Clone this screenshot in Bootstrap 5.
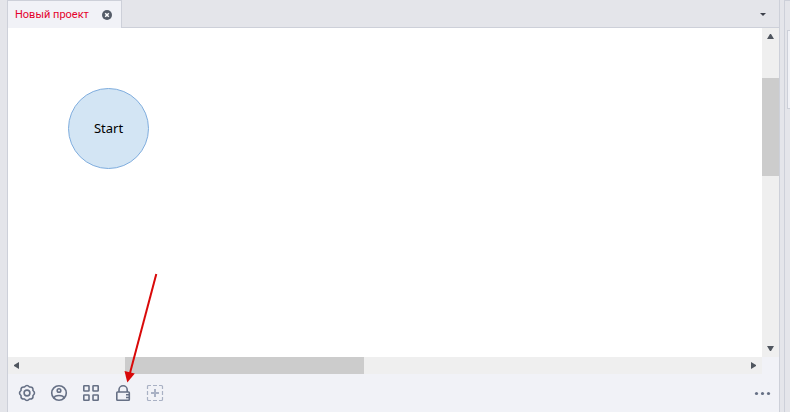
<!DOCTYPE html>
<html lang="ru">
<head>
<meta charset="utf-8">
<meta name="viewport" content="width=device-width, initial-scale=1">
<title>Новый проект</title>
<link href="https://cdn.jsdelivr.net/npm/bootstrap@5.3.0/dist/css/bootstrap.min.css" rel="stylesheet">
<style>
  :root { --edge: #cdd0d9; --chrome: #e4e5ea; --panel: #f1f2f7; --ink: #667085; --track: #efefef; --thumb: #cccccc; }
  body { background: var(--chrome); font-family: Roboto, "Noto Sans", sans-serif; font-size: 11px; line-height: 16px; color: #000; }
  svg { display: block; }
  button { border: 0; padding: 0; background: transparent; color: inherit; }
  .editor { margin-left: 7px; border: solid var(--edge); border-width: 0 1px; background: var(--panel); }
  .tab-strip { height: 28px; background: var(--chrome); box-shadow: inset 0 -1px var(--edge); }
  .doc-tab { background: var(--panel); border: solid var(--edge); border-width: 1px 1px 0 0; padding: 0 9px 0 7px; gap: 13px; }
  .doc-title { color: #e4002b; }
  .tab-menu { width: 17px; margin-right: 8px; color: #3c414b; }
  .canvas { background: #fff; }
  .node-start { left: 60px; top: 60px; width: 81px; height: 81px; padding-bottom: 2px; background: #d3e5f4; border: 1px solid #7fadde; font-family: "Noto Sans", sans-serif; font-size: 13px; }
  .bar-v { width: 17px; background: var(--track); }
  .bar-h { height: 17px; margin-right: 17px; background: var(--track); }
  .step { flex: 0 0 17px; color: #50565f; display: flex; align-items: center; justify-content: center; }
  .thumb { background: var(--thumb); flex: 98 1 0; }
  .before { flex: 33 1 0; } .after { flex: 164 1 0; }
  .bar-h .before { flex-grow: 100; } .bar-h .thumb { flex-grow: 239; } .bar-h .after { flex-grow: 381; }
  .tools { height: 38px; padding: 0 8px 0 10px; gap: 14px; color: var(--ink); }
  .side { width: 6px; margin-left: 4px; border: solid var(--edge); border-width: 1px 0 0 1px; padding: 29px 0 0 2px; }
  .side-box { height: 79px; background: var(--panel); border: solid var(--edge); border-width: 1px 0 1px 1px; }
  .pointer { left: 120px; top: 272px; pointer-events: none; }
</style>
<script src="https://cdn.jsdelivr.net/npm/bootstrap@5.3.0/dist/js/bootstrap.bundle.min.js"></script>
</head>
<body class="vh-100 d-flex overflow-hidden position-relative">
<main class="editor flex-grow-1 d-flex flex-column">
  <header class="tab-strip d-flex">
    <div class="doc-tab d-flex align-items-center">
      <span class="doc-title">Новый проект</span>
      <button type="button" aria-label="Закрыть"><svg width="10" height="10" viewBox="0 0 10 10"><circle cx="5" cy="5" r="5" fill="#555c68"/><path d="M3.2 3.2l3.6 3.6M6.8 3.2L3.2 6.8" stroke="#fff" stroke-width="1.5"/></svg></button>
    </div>
    <button class="tab-menu ms-auto d-flex align-items-center justify-content-center" type="button" aria-label="Список вкладок"><svg width="6" height="3" viewBox="0 0 6 3"><path d="M0 0h6L3 3z" fill="currentColor"/></svg></button>
  </header>
  <div class="flex-grow-1 d-flex">
    <section class="canvas flex-grow-1 position-relative" aria-label="Схема">
      <div class="node-start position-absolute rounded-circle d-flex align-items-center justify-content-center">Start</div>
    </section>
    <div class="bar-v d-flex flex-column">
      <button class="step" type="button" aria-label="Вверх"><svg width="7" height="5" viewBox="0 0 7 5"><path d="M0 5h7L4 0H3z" fill="currentColor"/></svg></button>
      <div class="before"></div><div class="thumb"></div><div class="after"></div>
      <button class="step" type="button" aria-label="Вниз"><svg width="7" height="5" viewBox="0 0 7 5"><path d="M0 0h7L4 5H3z" fill="currentColor"/></svg></button>
    </div>
  </div>
  <div class="bar-h d-flex">
    <button class="step" type="button" aria-label="Влево"><svg width="5" height="7" viewBox="0 0 5 7"><path d="M5 0v7L0 4V3z" fill="currentColor"/></svg></button>
    <div class="before"></div><div class="thumb"></div><div class="after"></div>
    <button class="step" type="button" aria-label="Вправо"><svg width="5" height="7" viewBox="0 0 5 7"><path d="M0 0v7l5-3V3z" fill="currentColor"/></svg></button>
  </div>
  <footer class="tools d-flex align-items-center">
    <button type="button" aria-label="Настройки"><svg width="18" height="18" viewBox="0 0 18 18" fill="none" stroke="currentColor" stroke-width="1.6" stroke-linejoin="round"><path d="M15 6.500Q18 9 15 11.500 15.400 15.400 11.500 15 9 18 6.500 15 2.600 15.400 3 11.500 0 9 3 6.500 2.600 2.600 6.500 3 9 0 11.500 3 15.400 2.600 15 6.500z" style="display:none"/><path d="M15 6.500Q18 9 15 11.500Q15.400 15.400 11.500 15Q9 18 6.500 15Q2.600 15.400 3 11.500Q0 9 3 6.500Q2.600 2.600 6.500 3Q9 0 11.500 3Q15.400 2.600 15 6.500z"/><circle cx="9" cy="9" r="2.900"/></svg></button>
    <button type="button" aria-label="Профиль"><svg width="18" height="18" viewBox="0 0 18 18" fill="none" stroke="currentColor" stroke-width="1.6"><circle cx="9" cy="9" r="7.300"/><circle cx="9" cy="6.500" r="1.800"/><path d="M4 14.300C4.300 12.200 6 11.500 9 11.500s4.700.7 5 2.800"/></svg></button>
    <button type="button" aria-label="Блоки"><svg width="18" height="18" viewBox="0 0 18 18" fill="none" stroke="currentColor" stroke-width="1.6"><rect x="1.800" y="1.800" width="5.200" height="5.200" rx=".5"/><rect x="11" y="1.800" width="5.200" height="5.200" rx=".5"/><rect x="1.800" y="11" width="5.200" height="5.200" rx=".5"/><rect x="11" y="11" width="5.200" height="5.200" rx=".5"/></svg></button>
    <button type="button" aria-label="Доступ"><svg width="18" height="18" viewBox="0 0 18 18" fill="none" stroke="currentColor" stroke-width="1.6"><path d="M5 8V5.900a4.100 4.100 0 0 1 8.200 0V8"/><rect x="2.800" y="8" width="12.500" height="8.300" rx=".7"/><path d="M12 10.700H15M12 13.500H15" stroke-width="1.400"/></svg></button>
    <button type="button" aria-label="Добавить"><svg width="18" height="18" viewBox="0 0 18 18" fill="none" stroke="#a9b1c4" stroke-width="1.200"><path d="M1.500 5V2.500a1 1 0 0 1 1-1H5M7 1.500h4M13 1.500h2.500a1 1 0 0 1 1 1V5M16.500 7v4M16.500 13v2.500a1 1 0 0 1-1 1H13M11 16.500H7M5 16.500H2.500a1 1 0 0 1-1-1V13M1.500 11V7"/><path d="M9 5v8M5 9h8" stroke-width="2"/></svg></button>
    <button class="ms-auto" type="button" aria-label="Ещё"><svg width="17" height="18" viewBox="0 0 17 18" fill="currentColor"><circle cx="2.500" cy="9.500" r="1.600"/><circle cx="8.500" cy="9.500" r="1.600"/><circle cx="14.500" cy="9.500" r="1.600"/></svg></button>
  </footer>
</main>
<aside class="side"><div class="side-box"></div></aside>
<svg class="pointer position-absolute" width="40" height="112" viewBox="0 0 40 112" aria-hidden="true"><path d="M36.300 2L10 101" stroke="#d90909" stroke-width="2" fill="none"/><path d="M7.300 110.500L4.500 99 14.800 101.500z" fill="#d90909"/></svg>
</body>
</html>
